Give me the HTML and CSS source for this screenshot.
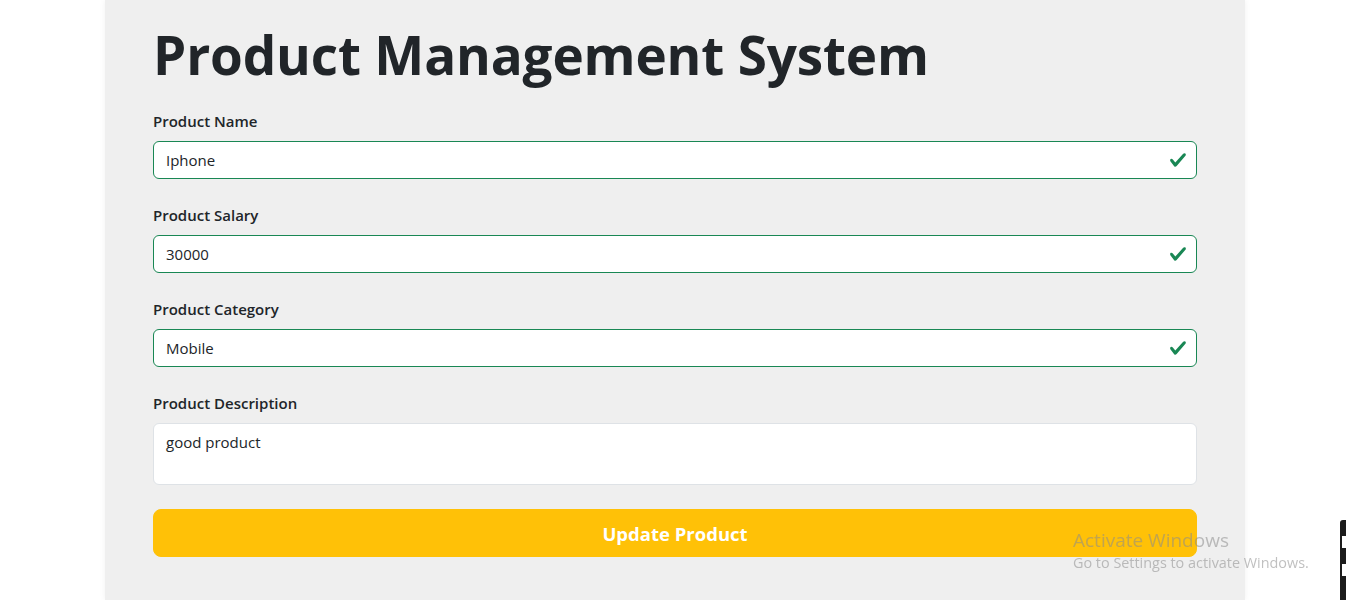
FILE: index.html
```html
<!DOCTYPE html>
<html lang="en">
<head>
<meta charset="utf-8">
<title>Product Management System</title>
<link rel="stylesheet" href="styles.css">
</head>
<body>
<div class="page">
  <main class="panel">
    <h1 class="title">Product Management System</h1>
    <form class="form">
      <div class="group">
        <label class="label">Product Name</label>
        <div class="field">
          <input class="input valid" type="text" value="Iphone">
          <svg class="check" viewBox="0 0 8 8" width="18" height="18"><path fill="#198754" d="M2.3 6.73.6 4.53c-.4-1.04.46-1.4 1.1-.8l1.1 1.4 3.4-3.8c.6-.63 1.6-.27 1.2.7l-4 4.6c-.43.5-.8.4-1.1.1z"/></svg>
        </div>
      </div>
      <div class="group">
        <label class="label">Product Salary</label>
        <div class="field">
          <input class="input valid" type="text" value="30000">
          <svg class="check" viewBox="0 0 8 8" width="18" height="18"><path fill="#198754" d="M2.3 6.73.6 4.53c-.4-1.04.46-1.4 1.1-.8l1.1 1.4 3.4-3.8c.6-.63 1.6-.27 1.2.7l-4 4.6c-.43.5-.8.4-1.1.1z"/></svg>
        </div>
      </div>
      <div class="group">
        <label class="label">Product Category</label>
        <div class="field">
          <input class="input valid" type="text" value="Mobile">
          <svg class="check" viewBox="0 0 8 8" width="18" height="18"><path fill="#198754" d="M2.3 6.73.6 4.53c-.4-1.04.46-1.4 1.1-.8l1.1 1.4 3.4-3.8c.6-.63 1.6-.27 1.2.7l-4 4.6c-.43.5-.8.4-1.1.1z"/></svg>
        </div>
      </div>
      <div class="group">
        <label class="label">Product Description</label>
        <textarea class="input textarea" rows="2">good product</textarea>
      </div>
      <button type="button" class="btn">Update Product</button>
    </form>
  </main>
</div>
<div class="activate">
  <div class="activate-title">Activate Windows</div>
  <div class="activate-sub">Go to Settings to activate Windows.</div>
</div>
<div class="edge-widget">
  <span class="edge-bar"></span>
  <span class="edge-bar"></span>
</div>
</body>
</html>
```
FILE: styles.css
```css
* { box-sizing: border-box; }
html, body { margin: 0; padding: 0; background: #ffffff; }
body {
  font-family: "Open Sans", "Noto Sans", sans-serif;
  color: #212529;
  font-size: 16px;
  line-height: 1.5;
  overflow: hidden;
  height: 600px;
}
.page {
  padding-left: 4px;
}
.panel {
  width: 1140px;
  margin: 0 auto;
  background: #efefef;
  padding: 21px 48px 43px;
  box-shadow: 0 0 6px rgba(0,0,0,0.06);
}
.title {
  margin: 0 0 21px;
  font-size: 53px;
  line-height: 67px;
  font-weight: 700;
  color: #212529;
  letter-spacing: -0.15px;
}
.form { display: flex; flex-direction: column; }
.group { display: flex; flex-direction: column; margin-bottom: 24px; }
.label {
  font-size: 15px;
  line-height: 24px;
  font-weight: 600;
  margin-bottom: 8px;
  color: #212529;
}
.field { position: relative; }
.input {
  display: block;
  width: 100%;
  height: 38px;
  padding: 6px 38px 6px 12px;
  font-family: inherit;
  font-size: 15px;
  line-height: 24px;
  color: #212529;
  background: #fff;
  border: 1px solid #dee2e6;
  border-radius: 6px;
  outline: none;
}
.input.valid { border-color: #198754; }
.textarea {
  height: 62px;
  resize: none;
  padding-right: 12px;
}
.check {
  position: absolute;
  right: 10px;
  top: 10px;
}
.btn {
  display: block;
  width: 100%;
  height: 48px;
  border: 1px solid #ffc107;
  background: #ffc107;
  color: #fff;
  font-family: inherit;
  font-size: 18.5px;
  font-weight: 700;
  line-height: 30px;
  border-radius: 8px;
  padding: 9px 16px 7px;
  cursor: pointer;
}
.activate {
  position: fixed;
  left: 1073px;
  top: 527px;
  color: rgba(140,140,140,0.55);
  font-family: "Open Sans", sans-serif;
  pointer-events: none;
}
.activate-title { font-size: 19px; line-height: 26px; }
.activate-sub { font-size: 14.4px; line-height: 20px; margin-top: 0; }
.edge-widget {
  position: fixed;
  left: 1340px;
  top: 520px;
  width: 6px;
  height: 80px;
  background: #1b1b1b;
  border-radius: 3px 0 0 0;
  display: flex;
  flex-direction: column;
  gap: 16px;
  padding-top: 16px;
  padding-left: 2px;
}
.edge-bar { display: block; height: 12px; background: #fff; }
```
